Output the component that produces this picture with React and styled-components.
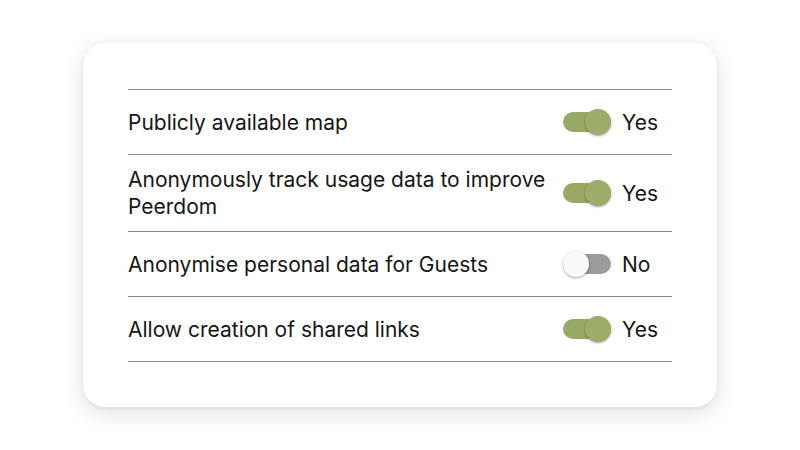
import React from "react";
import styled, { createGlobalStyle } from "styled-components";

const Global = createGlobalStyle`
  html, body { margin: 0; padding: 0; background: #ffffff; }
  body { font-family: Inter, "Noto Sans", sans-serif; color: #161616; }
`;

const Page = styled.div`
  width: 800px;
  height: 450px;
  padding: 43px 0 0 83px;
  box-sizing: border-box;
`;

const Card = styled.div`
  width: 634px;
  box-sizing: border-box;
  background: #fff;
  border-radius: 22px;
  box-shadow: 0 6px 22px rgba(0, 0, 0, 0.13), 0 1px 4px rgba(0, 0, 0, 0.05);
  padding: 46px 45px 45px 45px;
`;

const List = styled.div`
  border-top: 1px solid #8a8a8a;
`;

const Row = styled.div`
  display: flex;
  align-items: center;
  min-height: 65px;
  box-sizing: border-box;
  padding: 11px 0;
  border-bottom: 1px solid #8a8a8a;
`;

const Label = styled.div`
  flex: 1;
  font-size: 21px;
  line-height: 27px;
  padding-right: 12px;
`;

const Control = styled.div`
  width: 109px;
  display: flex;
  align-items: center;
  gap: 11px;
  flex-shrink: 0;
`;

const Track = styled.div`
  position: relative;
  width: 48px;
  height: 20px;
  border-radius: 10px;
  background: ${(p) => (p.$on ? "#97a964" : "#9b9b9b")};
`;

const Thumb = styled.div`
  position: absolute;
  top: -3px;
  left: ${(p) => (p.$on ? "22px" : "0px")};
  width: 26px;
  height: 26px;
  border-radius: 50%;
  background: ${(p) => (p.$on ? "#9bad69" : "#fafafa")};
  box-shadow: 0 1px 3px rgba(0, 0, 0, 0.25), 0 1px 1px rgba(0, 0, 0, 0.12);
`;

const State = styled.span`
  font-size: 21px;
  line-height: 27px;
`;

const items = [
  { label: "Publicly available map", on: true },
  { label: "Anonymously track usage data to improve Peerdom", on: true },
  { label: "Anonymise personal data for Guests", on: false },
  { label: "Allow creation of shared links", on: true },
];

export default function App() {
  return (
    <>
      <Global />
      <Page>
        <Card>
          <List>
            {items.map((it) => (
              <Row key={it.label}>
                <Label>{it.label}</Label>
                <Control>
                  <Track $on={it.on}>
                    <Thumb $on={it.on} />
                  </Track>
                  <State>{it.on ? "Yes" : "No"}</State>
                </Control>
              </Row>
            ))}
          </List>
        </Card>
      </Page>
    </>
  );
}
